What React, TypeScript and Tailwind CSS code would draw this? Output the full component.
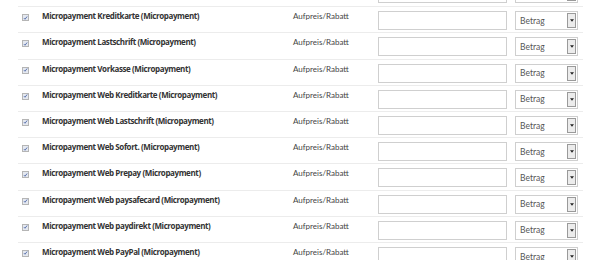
import React from 'react';

const rows = [
  '',
  'Micropayment Kreditkarte (Micropayment)',
  'Micropayment Lastschrift (Micropayment)',
  'Micropayment Vorkasse (Micropayment)',
  'Micropayment Web Kreditkarte (Micropayment)',
  'Micropayment Web Lastschrift (Micropayment)',
  'Micropayment Web Sofort. (Micropayment)',
  'Micropayment Web Prepay (Micropayment)',
  'Micropayment Web paysafecard (Micropayment)',
  'Micropayment Web paydirekt (Micropayment)',
  'Micropayment Web PayPal (Micropayment)',
];

const Check = () => (
  <span className="flex h-[7px] w-[7px] items-center justify-center border border-[#b5b5b5] bg-[#e4e8f0]">
    <svg viewBox="0 0 8 8" className="h-[6px] w-[6px]">
      <path d="M1.5 4.2 L3.2 6 L6.6 1.6" fill="none" stroke="#3d5a9e" strokeWidth="1.3" />
    </svg>
  </span>
);

const SelectBox = () => (
  <div className="flex h-[19px] w-[63px] items-center border border-[#cfcfcf] bg-white">
    <span className="flex-1 pl-[4px] pt-[1px] text-[8.5px] text-[#555]">Betrag</span>
    <span className="mr-[1px] flex h-[15px] w-[9px] items-center justify-center border border-[#9a9a9a] bg-[#ececec]">
      <svg viewBox="0 0 6 4" className="h-[3px] w-[4px]">
        <path d="M0 0 H6 L3 4 Z" fill="#222" />
      </svg>
    </span>
  </div>
);

export default function App() {
  return (
    <div className="h-[260px] w-[605px] overflow-hidden bg-white font-['Lato',sans-serif]">
      <div className="-mt-[20px] pl-[18px] pr-[22px]">
        {rows.map((name, i) => (
          <div key={i} className="flex h-[26.2px] items-start border-t border-[#ececec] first:border-t-0">
            <div className="flex w-[24px] pt-[7px] pl-[4px]">{name && <Check />}</div>
            <div className="w-[251px] pt-[3px] font-['Open_Sans',sans-serif] text-[8px] font-bold tracking-[-0.4px] text-[#333]">
              {name}
            </div>
            <div className="w-[85px] pt-[3px] text-[8px] text-[#444]">{name && 'Aufpreis/Rabatt'}</div>
            <div className="flex gap-[8px] pt-[4px]">
              <div className="h-[19px] w-[129px] border border-[#cfcfcf] bg-white" />
              <SelectBox />
            </div>
          </div>
        ))}
      </div>
    </div>
  );
}
